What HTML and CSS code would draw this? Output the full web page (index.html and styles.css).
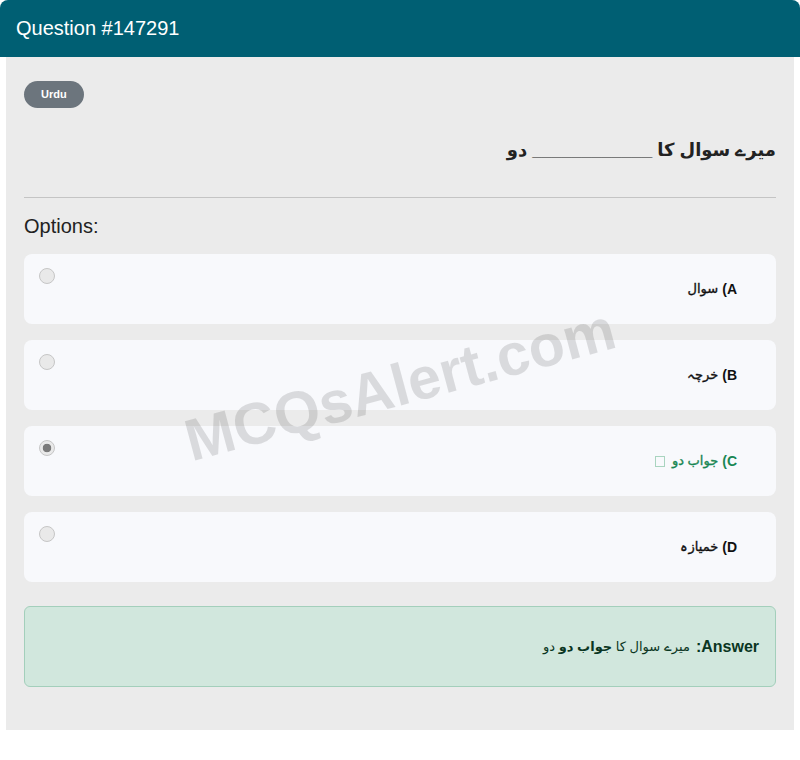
FILE: index.html
```html
<!DOCTYPE html>
<html lang="en">
<head>
<meta charset="utf-8">
<title>Question #147291</title>
<link rel="stylesheet" href="styles.css">
</head>
<body>
<div class="card">
  <div class="card-header">Question #147291</div>
  <div class="card-body">
    <span class="badge">Urdu</span>
    <p class="question" dir="rtl">میرے سوال کا ____________ دو</p>
    <hr class="divider">
    <h5 class="options-title">Options:</h5>
    <div class="options">
      <div class="option">
        <span class="radio"></span>
        <span class="label" dir="rtl"><b>A)</b> <span class="ur">سوال</span></span>
      </div>
      <div class="option">
        <span class="radio"></span>
        <span class="label" dir="rtl"><b>B)</b> <span class="ur">خرچہ</span></span>
      </div>
      <div class="option">
        <span class="radio checked"></span>
        <span class="label correct" dir="rtl"><b>C)</b> <span class="ur">جواب دو</span> <span class="tofu"></span></span>
      </div>
      <div class="option">
        <span class="radio"></span>
        <span class="label" dir="rtl"><b>D)</b> <span class="ur">خمیازہ</span></span>
      </div>
    </div>
    <div class="answer" dir="rtl">
      <strong class="answer-key">Answer:</strong>
      <span class="answer-text">میرے سوال کا <b>جواب دو</b> دو</span>
    </div>
    <div class="watermark">MCQsAlert.com</div>
  </div>
</div>
</body>
</html>
```

FILE: styles.css
```css
html, body {
  margin: 0;
  padding: 0;
  background: #ffffff;
}

body {
  font-family: "Liberation Sans", Arial, "DejaVu Sans", sans-serif;
  color: #212529;
}

.card {
  width: 800px;
}

.card-header {
  background: #005f73;
  color: #ffffff;
  font-size: 20px;
  line-height: 24px;
  height: 57px;
  box-sizing: border-box;
  padding: 16px 16px 17px;
  border-radius: 8px 8px 0 0;
}

.card-body {
  position: relative;
  overflow: hidden;
  margin: 0 6px;
  padding: 24px 18px 24px;
  background: #ebebeb;
}

.badge {
  display: inline-block;
  background: #6c757d;
  color: #ffffff;
  font-size: 11px;
  font-weight: bold;
  line-height: 13px;
  padding: 7px 17px;
  border-radius: 14px;
  vertical-align: top;
}

.question {
  margin: 30px 0 35px;
  font-size: 18px;
  font-weight: bold;
  line-height: 24px;
  color: #222222;
  text-align: right;
}

.divider {
  margin: 0;
  border: 0;
  border-top: 1px solid #c4c4c4;
}

.options-title {
  margin: 16px 0 16px;
  font-size: 20px;
  font-weight: normal;
  line-height: 24px;
  color: #222222;
}

.options {
  display: flex;
  flex-direction: column;
  gap: 16px;
}

.option {
  display: flex;
  height: 70px;
  box-sizing: border-box;
  padding: 14px 39px 14px 15px;
  background: #f8f9fc;
  border-radius: 8px;
}

.radio {
  flex: none;
  width: 16px;
  height: 16px;
  box-sizing: border-box;
  border: 1px solid #c6c6c6;
  border-radius: 50%;
  background: #e9e9e9;
}

.radio.checked {
  background: radial-gradient(circle, #7a7a7a 0 4px, #e9e9e9 4.6px);
}

.label {
  margin-left: auto;
  align-self: center;
  font-size: 14px;
  font-weight: bold;
  line-height: 20px;
  color: #111111;
  display: flex;
  align-items: center;
  gap: 4px;
}

.label .ur {
  font-size: 13px;
  font-weight: normal;
  -webkit-text-stroke: 0.35px currentColor;
}

.label.correct {
  color: #198754;
}

.tofu {
  display: inline-block;
  width: 8px;
  height: 9px;
  border: 1px solid #a9d4bf;
  margin-right: 3px;
}

.answer {
  margin-top: 24px;
  margin-bottom: 19px;
  height: 81px;
  box-sizing: border-box;
  padding: 0 16px;
  display: flex;
  align-items: center;
  gap: 6px;
  background: #d1e7dd;
  border: 1px solid #a3cfbb;
  border-radius: 6px;
  color: #0a3622;
}

.answer-key {
  font-size: 16px;
  line-height: 20px;
}

.answer-text {
  font-size: 13px;
  line-height: 20px;
}

.watermark {
  position: absolute;
  left: 50%;
  top: 50%;
  transform: translate(-50%, -50%) translateY(-9px) rotate(-15deg);
  font-size: 59px;
  font-weight: bold;
  color: rgba(0, 0, 0, 0.12);
  white-space: nowrap;
  pointer-events: none;
}
```
